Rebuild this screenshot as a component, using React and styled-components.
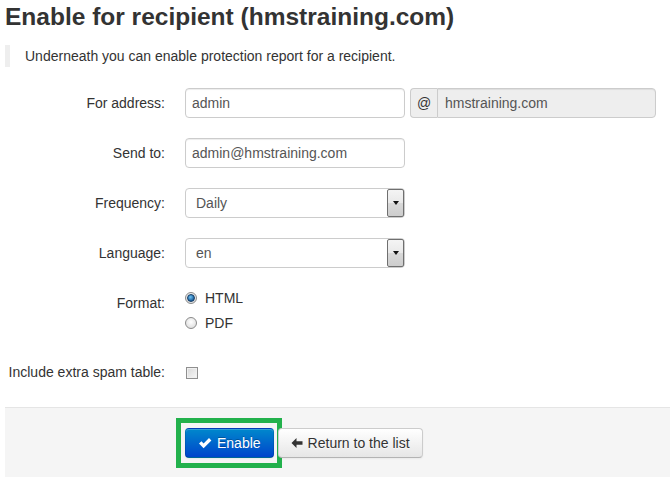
import React from "react";
import styled, { createGlobalStyle } from "styled-components";

const GlobalStyle = createGlobalStyle`
  html, body {
    margin: 0;
    padding: 0;
    background: #fff;
  }
  body {
    font-family: "Liberation Sans", Arial, sans-serif;
    font-size: 14px;
    line-height: 20px;
    color: #333;
  }
`;

const Page = styled.div`
  padding: 2px 0 0 5px;
  overflow: hidden;
`;

const Title = styled.h2`
  margin: 0;
  font-size: 24.5px;
  line-height: 30px;
  font-weight: bold;
  color: #333;
`;

const Lead = styled.blockquote`
  margin: 13px 0 0 0;
  padding: 1px 0 1px 15px;
  border-left: 5px solid #eee;
  line-height: 20px;
`;

const Form = styled.form`
  margin-top: 21px;
`;

const Group = styled.div`
  display: flex;
  min-height: 30px;
  margin-bottom: ${(p) => p.$gap || 20}px;
`;

const Label = styled.label`
  width: 160px;
  flex: none;
  padding-top: 5px;
  text-align: right;
  line-height: 20px;
`;

const Controls = styled.div`
  margin-left: 20px;
  display: flex;
  flex-direction: ${(p) => (p.$column ? "column" : "row")};
  gap: ${(p) => (p.$column ? 5 : 0)}px;
  align-items: ${(p) => (p.$column ? "flex-start" : "center")};
  align-self: flex-start;
`;

const Input = styled.div`
  box-sizing: border-box;
  width: 220px;
  height: 30px;
  padding: 4px 6px;
  border: 1px solid #ccc;
  border-radius: 4px;
  background: ${(p) => (p.$readonly ? "#eee" : "#fff")};
  box-shadow: inset 0 1px 1px rgba(0, 0, 0, 0.075);
  color: #555;
  line-height: 20px;
`;

const Prepend = styled.div`
  display: flex;
  margin-left: 5px;
`;

const AddOn = styled.span`
  box-sizing: border-box;
  height: 30px;
  width: 27px;
  padding: 4px 5px;
  border: 1px solid #ccc;
  border-right: none;
  border-radius: 4px 0 0 4px;
  background: #eee;
  color: #333;
  text-align: center;
`;

const PrependedInput = styled(Input)`
  width: 219px;
  border-radius: 0 4px 4px 0;
  padding-left: 7px;
`;

const Select = styled.div`
  box-sizing: border-box;
  width: 220px;
  height: 30px;
  display: flex;
  align-items: stretch;
  padding: 0 0 0 10px;
  border: 1px solid #ccc;
  border-radius: 4px;
  background: #fff;
  color: #555;
`;

const SelectValue = styled.span`
  flex: 1;
  line-height: 28px;
`;

const SelectArrow = styled.span`
  box-sizing: border-box;
  width: 17px;
  border: 1px solid #6f6f6f;
  border-radius: 2px;
  background: linear-gradient(#f4f4f4, #e9e9e9 50%, #d9d9d9 51%, #cdcdcd);
  display: flex;
  align-items: center;
  justify-content: center;

  &::before {
    content: "";
    border-left: 3.5px solid transparent;
    border-right: 3.5px solid transparent;
    border-top: 4px solid #111;
  }
`;

const Choice = styled.span`
  display: flex;
  align-items: center;
  gap: 8px;
  line-height: 20px;
  color: #333;
`;

const Radio = styled.span`
  box-sizing: border-box;
  width: 12px;
  height: 12px;
  border-radius: 50%;
  border: 1px solid #8a8a8a;
  background: radial-gradient(circle at 50% 40%, #fff, #d6d6d6);
  display: flex;
  align-items: center;
  justify-content: center;

  &::after {
    content: "";
    display: ${(p) => (p.$checked ? "block" : "none")};
    width: 6px;
    height: 6px;
    border-radius: 50%;
    background: radial-gradient(circle at 40% 35%, #6ec3f5, #1c5f9c 70%);
    border: 0.5px solid #123a63;
  }
`;

const Checkbox = styled.span`
  box-sizing: border-box;
  width: 12px;
  height: 12px;
  margin: 10px 0 0 1px;
  border: 1px solid #8f8f8f;
  background: linear-gradient(135deg, #d8d8d8, #f8f8f8);
  box-shadow: inset 0 0 0 1px #f0f0f0;
`;

const Actions = styled.div`
  padding: 20px 20px 30px 180px;
  border-top: 1px solid #e5e5e5;
  background: #f5f5f5;
  display: flex;
  gap: 4px;
`;

const Button = styled.button`
  position: relative;
  box-sizing: border-box;
  height: 30px;
  padding: 4px 12px;
  display: inline-flex;
  align-items: center;
  gap: 5px;
  font-family: "Liberation Sans", Arial, sans-serif;
  font-size: 14px;
  line-height: 20px;
  border-radius: 4px;
  border: 1px solid;
  cursor: pointer;
  color: ${(p) => (p.$primary ? "#fff" : "#333")};
  text-shadow: ${(p) =>
    p.$primary ? "0 -1px 0 rgba(0,0,0,0.25)" : "0 1px 1px rgba(255,255,255,0.75)"};
  background: ${(p) =>
    p.$primary
      ? "linear-gradient(#0088cc, #0044cc)"
      : "linear-gradient(#ffffff, #e6e6e6)"};
  border-color: ${(p) =>
    p.$primary
      ? "rgba(0,0,0,0.1) rgba(0,0,0,0.1) rgba(0,0,0,0.25)"
      : "#cccccc #cccccc #b3b3b3"};
  box-shadow: inset 0 1px 0 rgba(255, 255, 255, 0.2), 0 1px 2px rgba(0, 0, 0, 0.05);
`;

const Highlight = styled.span`
  position: absolute;
  top: -11px;
  bottom: -11px;
  left: -10px;
  right: -9px;
  border: 5px solid #22b14c;
  pointer-events: none;
`;

const CheckIcon = () => (
  <svg width="14" height="14" viewBox="0 0 14 14">
    <path d="M1 7.6 L3.4 5.2 L5.6 7.4 L11 2 L13.4 4.4 L5.6 12.2 Z" fill="#fff" />
  </svg>
);

const ArrowLeftIcon = () => (
  <svg width="12" height="12" viewBox="0 0 12 12">
    <path d="M0.5 6 L5.5 1 L5.5 4.2 L11.5 4.2 L11.5 7.8 L5.5 7.8 L5.5 11 Z" fill="#333" />
  </svg>
);

export default function App() {
  return (
    <>
      <GlobalStyle />
      <Page>
        <Title>Enable for recipient (hmstraining.com)</Title>
        <Lead>Underneath you can enable protection report for a recipient.</Lead>
        <Form onSubmit={(e) => e.preventDefault()}>
          <Group>
            <Label>For address:</Label>
            <Controls>
              <Input>admin</Input>
              <Prepend>
                <AddOn>@</AddOn>
                <PrependedInput $readonly>hmstraining.com</PrependedInput>
              </Prepend>
            </Controls>
          </Group>
          <Group>
            <Label>Send to:</Label>
            <Controls>
              <Input>admin@hmstraining.com</Input>
            </Controls>
          </Group>
          <Group>
            <Label>Frequency:</Label>
            <Controls>
              <Select>
                <SelectValue>Daily</SelectValue>
                <SelectArrow />
              </Select>
            </Controls>
          </Group>
          <Group>
            <Label>Language:</Label>
            <Controls>
              <Select>
                <SelectValue>en</SelectValue>
                <SelectArrow />
              </Select>
            </Controls>
          </Group>
          <Group $gap={24}>
            <Label>Format:</Label>
            <Controls $column>
              <Choice>
                <Radio $checked />
                HTML
              </Choice>
              <Choice>
                <Radio />
                PDF
              </Choice>
            </Controls>
          </Group>
          <Group>
            <Label>Include extra spam table:</Label>
            <Controls>
              <Checkbox />
            </Controls>
          </Group>
          <Actions>
            <Button type="button" $primary>
              <CheckIcon />
              Enable
              <Highlight />
            </Button>
            <Button type="button">
              <ArrowLeftIcon />
              Return to the list
            </Button>
          </Actions>
        </Form>
      </Page>
    </>
  );
}
